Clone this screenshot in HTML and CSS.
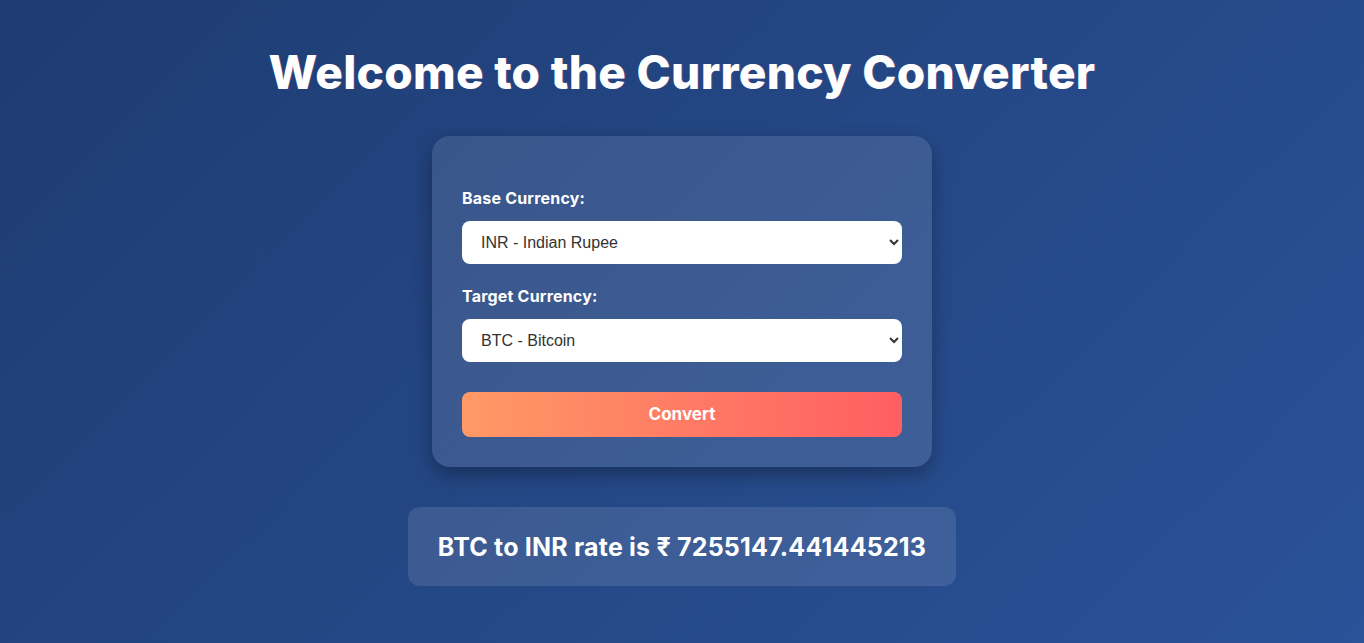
FILE: index.html
```html
<!DOCTYPE html>
<html lang="en">
<head>
<meta charset="utf-8">
<title>Currency Converter</title>
<link rel="stylesheet" href="styles.css">
</head>
<body>
<main class="page">
  <h1 class="title">Welcome to the Currency Converter</h1>
  <section class="card">
    <form class="form">
      <label class="label" for="base">Base Currency:</label>
      <select id="base" class="select">
        <option>INR - Indian Rupee</option>
      </select>
      <label class="label" for="target">Target Currency:</label>
      <select id="target" class="select">
        <option>BTC - Bitcoin</option>
      </select>
      <button type="button" class="btn">Convert</button>
    </form>
  </section>
  <div class="result">BTC to INR rate is ₹ 7255147.441445213</div>
</main>
</body>
</html>
```
FILE: styles.css
```css
* { box-sizing: border-box; }
html, body { margin: 0; height: 100%; }
body {
  background: linear-gradient(135deg, #1e3c72 0%, #2a5298 100%);
  font-family: "Inter", "DejaVu Sans", sans-serif;
  color: #fff;
  overflow: hidden;
}
.page {
  display: flex;
  flex-direction: column;
  align-items: center;
  padding-top: 44px;
}
.title {
  margin: 0;
  font-size: 46px;
  line-height: 56px;
  font-weight: 800;
  letter-spacing: 0.3px;
  text-shadow: 1px 0 0 rgba(255, 80, 120, 0.2);
}
.card {
  margin-top: 36px;
  width: 500px;
  padding: 52px 30px 30px;
  background: rgba(255, 255, 255, 0.11);
  border-radius: 18px;
  box-shadow: 0 8px 20px rgba(0, 0, 0, 0.3);
}
.form { display: flex; flex-direction: column; }
.label {
  font-size: 16px;
  font-weight: 700;
  line-height: 20px;
  letter-spacing: 0.2px;
  margin-bottom: 13px;
}
.select {
  height: 43px;
  border: none;
  border-radius: 8px;
  background: #fff;
  color: #333;
  font-family: "Liberation Sans", Arial, sans-serif;
  font-size: 16px;
  padding: 0 14px 0 15px;
  margin-bottom: 22px;
}
.btn {
  margin-top: 8px;
  height: 45px;
  border: none;
  border-radius: 8px;
  background: linear-gradient(90deg, #ff9966 0%, #ff5e62 100%);
  color: #fff;
  font-family: "Inter", "DejaVu Sans", sans-serif;
  font-size: 17px;
  font-weight: 700;
  padding-bottom: 2px;
}
.result {
  margin-top: 40px;
  width: 548px;
  height: 79px;
  display: flex;
  align-items: center;
  justify-content: center;
  background: rgba(255, 255, 255, 0.11);
  border-radius: 12px;
  font-size: 25px;
  font-weight: 700;
  letter-spacing: 0.2px;
}
```
